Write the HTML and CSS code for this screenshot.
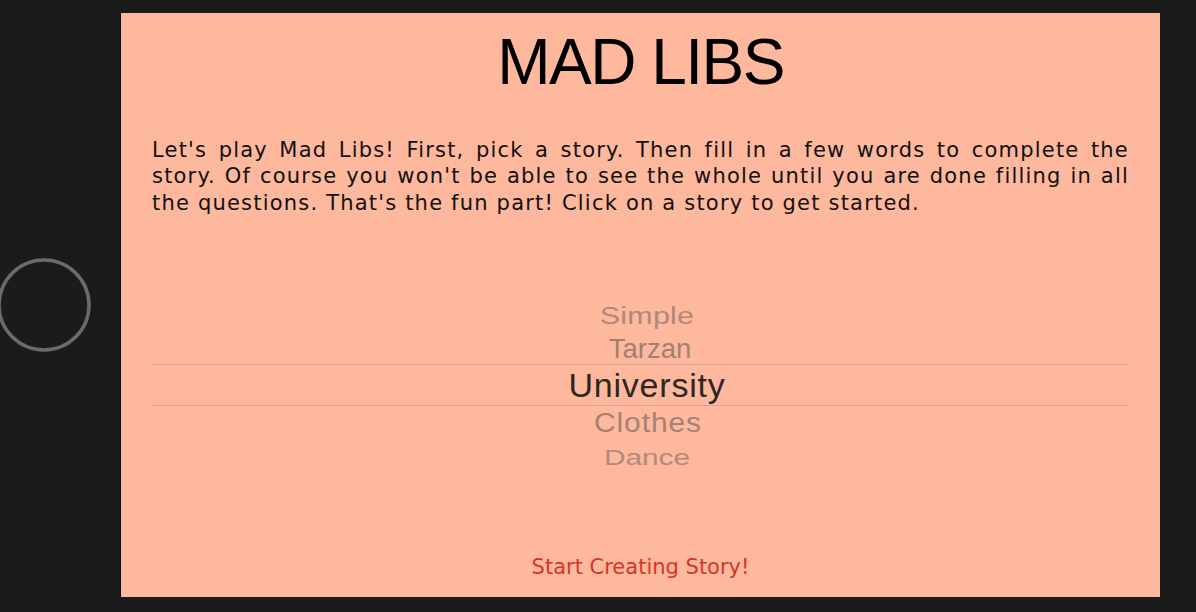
FILE: index.html
```html
<!DOCTYPE html>
<html lang="en">
<head>
<meta charset="utf-8">
<title>Mad Libs</title>
<link rel="stylesheet" href="styles.css">
</head>
<body>
  <div class="bezel">
    <svg class="home" width="96" height="96" viewBox="0 0 96 96">
      <circle cx="48" cy="48" r="45" fill="none" stroke="#6b6b6b" stroke-width="3.5"/>
    </svg>
  </div>
  <main class="screen">
    <h1 class="title">MAD LIBS</h1>
    <p class="intro">Let's play Mad Libs! First, pick a story. Then fill in a few words to complete the story. Of course you won't be able to see the whole until you are done filling in all the questions. That's the fun part! Click on a story to get started.</p>
    <div class="picker">
      <div class="row row-simple"><span class="item far">Simple</span></div>
      <div class="row row-tarzan"><span class="item near">Tarzan</span></div>
      <div class="row row-selected"><span class="item selected">University</span></div>
      <div class="row row-clothes"><span class="item near2">Clothes</span></div>
      <div class="row row-dance"><span class="item far2">Dance</span></div>
    </div>
    <button class="start">Start Creating Story!</button>
  </main>
</body>
</html>
```

FILE: styles.css
```css
html, body {
  margin: 0;
  padding: 0;
}

body {
  width: 1196px;
  height: 612px;
  background: #1b1b1b;
  display: flex;
  align-items: flex-start;
  overflow: hidden;
}

.bezel {
  width: 121px;
  height: 610px;
  flex: none;
  display: flex;
  align-items: center;
}

.home {
  display: block;
  margin-left: -4.5px;
}

.screen {
  width: 1039px;
  height: 584px;
  margin-top: 13px;
  box-sizing: border-box;
  padding: 17px 31px 17px;
  background: #feb89e;
  box-shadow: -1px 0 0 #0e0e0e;
  display: flex;
  flex-direction: column;
}

.title {
  margin: 0;
  font-family: "Liberation Sans", Arial, sans-serif;
  font-weight: 400;
  font-size: 64px;
  line-height: 64px;
  letter-spacing: -1.5px;
  text-align: center;
  color: #000;
}

.intro {
  margin: 42.5px 0 0;
  font-family: "DejaVu Sans", sans-serif;
  font-size: 21px;
  line-height: 26.5px;
  letter-spacing: 1.2px;
  text-align: justify;
  color: #111;
}

.picker {
  margin-top: 81px;
  display: flex;
  flex-direction: column;
  font-family: "Liberation Sans", Arial, sans-serif;
}

.row {
  display: flex;
  align-items: center;
  justify-content: center;
  padding-left: 13px;
}

.row-simple { height: 36px; }
.row-tarzan { height: 31px; padding-left: 19px; }
.row-selected {
  height: 40px;
  border-top: 1px solid #dca591;
  border-bottom: 1px solid #dca591;
}
.row-clothes { height: 34px; padding-left: 15px; }
.row-dance { height: 34px; }

.item {
  display: inline-block;
  white-space: nowrap;
  line-height: 1.2;
}

.selected {
  font-size: 34px;
  letter-spacing: 0.8px;
  color: #2d2724;
}

.near {
  font-size: 27.5px;
  color: #a47f70;
}

.far {
  font-size: 30.5px;
  letter-spacing: 0.2px;
  color: #ae8878;
  transform: scaleY(0.77);
}

.near2 {
  font-size: 30px;
  letter-spacing: 0.9px;
  color: #a88172;
  transform: scaleY(0.9);
}

.far2 {
  font-size: 29.8px;
  color: #b08a7a;
  transform: scaleY(0.76);
}

.start {
  margin: auto auto 0;
  padding: 0;
  border: 0;
  background: none;
  font-family: "DejaVu Sans", sans-serif;
  font-size: 21px;
  line-height: 26.5px;
  color: #d4361f;
  cursor: pointer;
}
```
